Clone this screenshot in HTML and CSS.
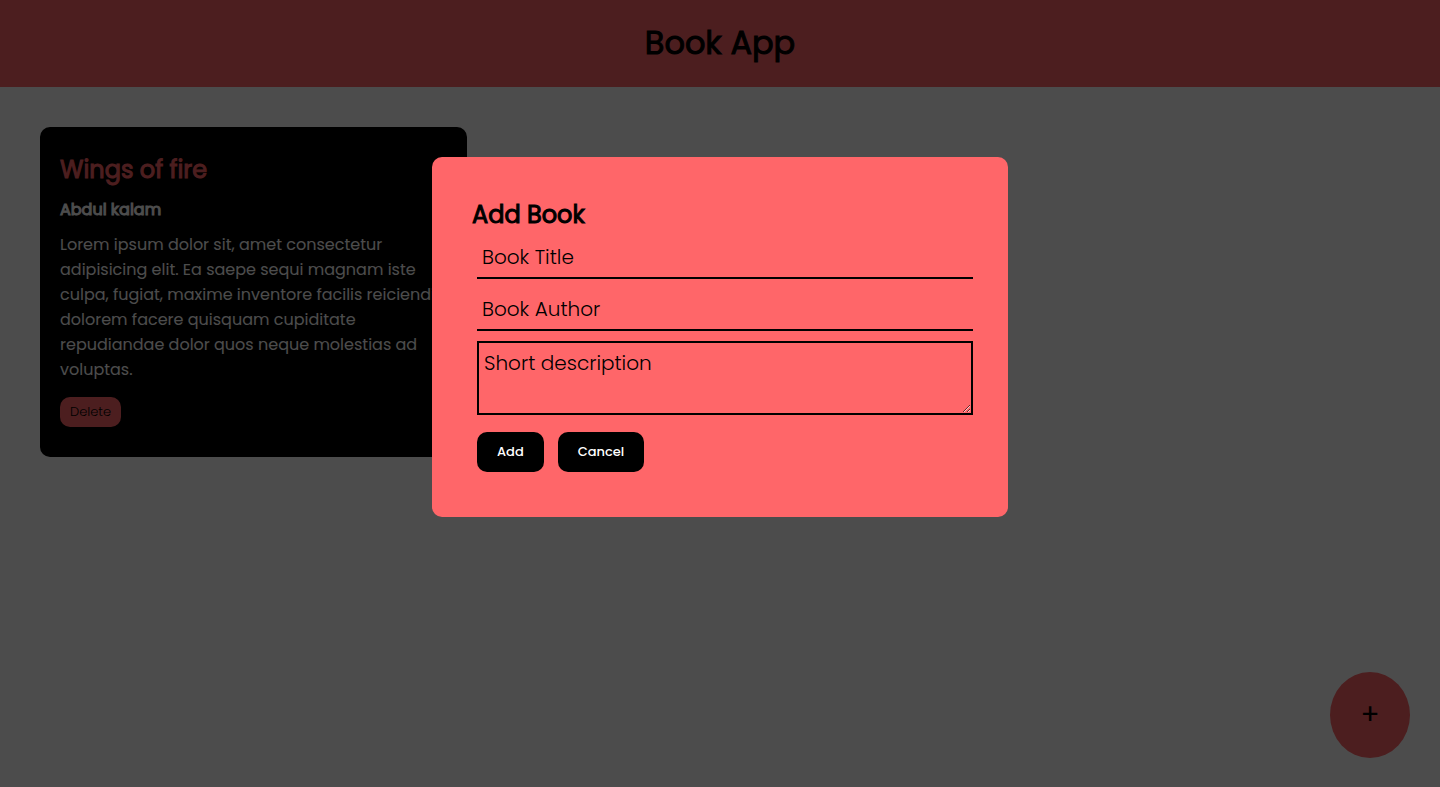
FILE: index.html
```html
<!DOCTYPE html>
<html lang="en">
<head>
<meta charset="UTF-8">
<meta name="viewport" content="width=device-width, initial-scale=1">
<title>Book App</title>
<link rel="stylesheet" href="styles.css">
</head>
<body>
<header class="navbar">
  <h1 class="heading navbar-title">Book App</h1>
</header>
<main class="container">
  <article class="book">
    <h2 class="heading book-title">Wings of fire</h2>
    <h3 class="heading book-author">Abdul kalam</h3>
    <p class="book-text">Lorem ipsum dolor sit, amet consectetur adipisicing elit. Ea saepe sequi magnam iste culpa, fugiat, maxime inventore facilis reiciendis dolorem facere quisquam cupiditate repudiandae dolor quos neque molestias ad voluptas.</p>
    <button class="book-delete" type="button">Delete</button>
  </article>
</main>
<button class="add-button" type="button" aria-label="Add a book">+</button>
<div class="overlay"></div>
<section class="popup" role="dialog" aria-labelledby="popup-title">
  <h2 class="heading popup-title" id="popup-title">Add Book</h2>
  <form class="popup-form">
    <input class="field" type="text" placeholder="Book Title" aria-label="Book Title">
    <input class="field" type="text" placeholder="Book Author" aria-label="Book Author">
    <textarea class="field field-area" placeholder="Short description" aria-label="Short description"></textarea>
    <div class="actions">
      <button class="action" type="button">Add</button>
      <button class="action" type="button">Cancel</button>
    </div>
  </form>
</section>
</body>
</html>
```
FILE: styles.css
```css
* {
  box-sizing: border-box;
  margin: 0;
  padding: 0;
  font-family: Poppins, Inter, sans-serif;
}

body {
  background: #fff;
  color: #000;
}

.heading {
  font-weight: 400;
  -webkit-text-stroke: 1px currentColor;
}

.navbar {
  padding: 18px 18px 19px;
  background: #ff6669;
  text-align: center;
}

.navbar-title {
  font-size: 32px;
  line-height: 50px;
}

.container {
  display: grid;
  grid-template-columns: repeat(3, 1fr);
  gap: 40px;
  padding: 40px;
}

.book {
  padding: 25px 20px 30px;
  border-radius: 10px;
  background: #000;
  color: #fff;
}

.book-title {
  color: #ff6669;
  font-size: 24px;
  line-height: 36px;
}

.book-author {
  margin: 10px 0;
  font-size: 16px;
  line-height: 24px;
}

.book-text {
  font-size: 16px;
  line-height: 25px;
}

.book-delete {
  display: block;
  margin-top: 15px;
  padding: 5px 10px;
  border: none;
  border-radius: 10px;
  background: #ff6669;
  color: #000;
  font-size: 13px;
  line-height: 20px;
  font-weight: 300;
}

.add-button {
  position: fixed;
  right: 30px;
  bottom: 29px;
  width: 80px;
  height: 86px;
  border: none;
  border-radius: 50%;
  background: #ff6669;
  color: #000;
  font-size: 28px;
}

.overlay {
  position: fixed;
  inset: 0;
  background: rgba(0, 0, 0, 0.7);
}

.popup {
  position: fixed;
  top: 20%;
  left: 30%;
  width: 40%;
  padding: 40px;
  border-radius: 10px;
  background: #ff6669;
}

.popup-title {
  font-size: 24px;
  line-height: 35px;
}

.popup-form {
  display: flex;
  flex-direction: column;
  gap: 10px;
  margin: 5px -5px 5px 5px;
}

.field {
  width: 100%;
  height: 42px;
  padding: 5px;
  border: none;
  border-bottom: 2px solid #000;
  background: transparent;
  color: #000;
  font-size: 20px;
  line-height: 30px;
  font-weight: 300;
  outline: none;
}

.field::placeholder {
  color: #000;
  opacity: 1;
}

.field-area {
  height: 74px;
  border: 2px solid #000;
}

.actions {
  display: flex;
  gap: 14px;
  margin-top: 7px;
}

.action {
  padding: 10px 20px;
  border: none;
  border-radius: 10px;
  background: #000;
  color: #fff;
  font-size: 13px;
  line-height: 20px;
  font-weight: 500;
}
```
